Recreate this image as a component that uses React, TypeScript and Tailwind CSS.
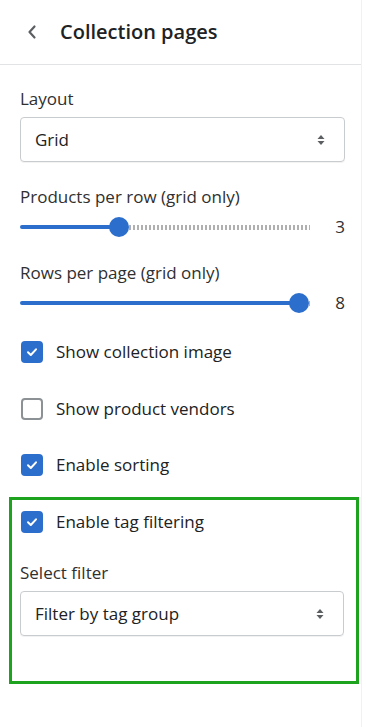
import React from "react";

const Chevron = () => (
  <svg width="12" height="16" viewBox="0 0 12 16" fill="none">
    <path
      d="M8.5 2.5 3.5 8l5 5.5"
      stroke="#5c5f62"
      strokeWidth="2.2"
      strokeLinecap="round"
      strokeLinejoin="round"
    />
  </svg>
);

const Carets = () => (
  <svg width="12" height="16" viewBox="0 0 12 16">
    <path d="M6 3 9.5 7h-7z" fill="#5c5f62" />
    <path d="M6 13 9.5 9h-7z" fill="#5c5f62" />
  </svg>
);

const Check = () => (
  <svg width="14" height="14" viewBox="0 0 14 14" fill="none">
    <path
      d="M3 7.3 5.8 10 11 4.3"
      stroke="white"
      strokeWidth="2"
      strokeLinecap="round"
      strokeLinejoin="round"
    />
  </svg>
);

interface SelectProps {
  value: string;
}

const Select: React.FC<SelectProps> = ({ value }) => (
  <div className="flex h-[45px] items-center justify-between rounded-[4px] border border-[#c9cccf] pl-[14px] pr-[17px] text-[#202223] shadow-[0_1px_0_rgba(0,0,0,0.05)]">
    <span>{value}</span>
    <Carets />
  </div>
);

interface SliderProps {
  label: string;
  value: number;
  pos: number; // thumb center offset in px from track start
}

const Slider: React.FC<SliderProps> = ({ label, value, pos }) => (
  <div>
    <div className="text-[#303030]">{label}</div>
    <div className="mt-[6px] flex h-[24px] items-center">
      <div className="relative h-[24px] w-[290px]">
        <div
          className="absolute left-0 top-[10px] h-[4px] rounded-full bg-[#2c6ecb]"
          style={{ width: pos }}
        />
        <div
          className="absolute right-0 top-[10px] h-[5px] bg-[repeating-linear-gradient(90deg,#b0b0b0_0_2px,transparent_2px_4px)]"
          style={{ left: pos + 10 }}
        />
        <div
          className="absolute top-[2px] h-[20px] w-[20px] rounded-full bg-[#2c6ecb]"
          style={{ left: pos - 10 }}
        />
      </div>
      <div className="flex-1 text-right text-[#303030]">{value}</div>
    </div>
  </div>
);

interface CheckboxProps {
  label: string;
  checked?: boolean;
}

const Checkbox: React.FC<CheckboxProps> = ({ label, checked }) => (
  <div className="flex h-[24px] items-center gap-[13px]">
    {checked ? (
      <div className="ml-px flex h-[22px] w-[22px] items-center justify-center rounded-[4px] bg-[#2c6ecb]">
        <Check />
      </div>
    ) : (
      <div className="ml-px h-[22px] w-[22px] rounded-[4px] border-2 border-[#8c9196]" />
    )}
    <span className="text-[#202223]">{label}</span>
  </div>
);

export default function App() {
  return (
    <div className="h-[727px] w-[366px] bg-white font-['Open_Sans',sans-serif] text-[17px] leading-6">
      <div className="h-full w-[362px] border-r border-[#f1f1f1]">
        <header className="flex h-[65px] items-center gap-[22px] border-b border-[#e1e3e5] pl-[26px]">
          <Chevron />
          <h1 className="text-[20px] font-semibold text-[#202223]">
            Collection pages
          </h1>
        </header>

        <div className="pl-5 pr-4 pt-[22px]">
          <div className="text-[#303030]">Layout</div>
          <div className="mt-[6px]">
            <Select value="Grid" />
          </div>

          <div className="mt-[23px]">
            <Slider label="Products per row (grid only)" value={3} pos={99} />
          </div>
          <div className="mt-[22px]">
            <Slider label="Rows per page (grid only)" value={8} pos={279} />
          </div>

          <div className="mt-[25px] flex flex-col gap-[32.5px]">
            <Checkbox label="Show collection image" checked />
            <Checkbox label="Show product vendors" />
            <Checkbox label="Enable sorting" checked />
          </div>

          <div className="-ml-[11px] mr-[-14px] mt-[20px] border-[3px] border-[#1ea31e] pb-[45px] pl-2 pr-3 pt-[10px]">
            <Checkbox label="Enable tag filtering" checked />
            <div className="mt-[27px] text-[#303030]">Select filter</div>
            <div className="mt-[6px]">
              <Select value="Filter by tag group" />
            </div>
          </div>
        </div>
      </div>
    </div>
  );
}
